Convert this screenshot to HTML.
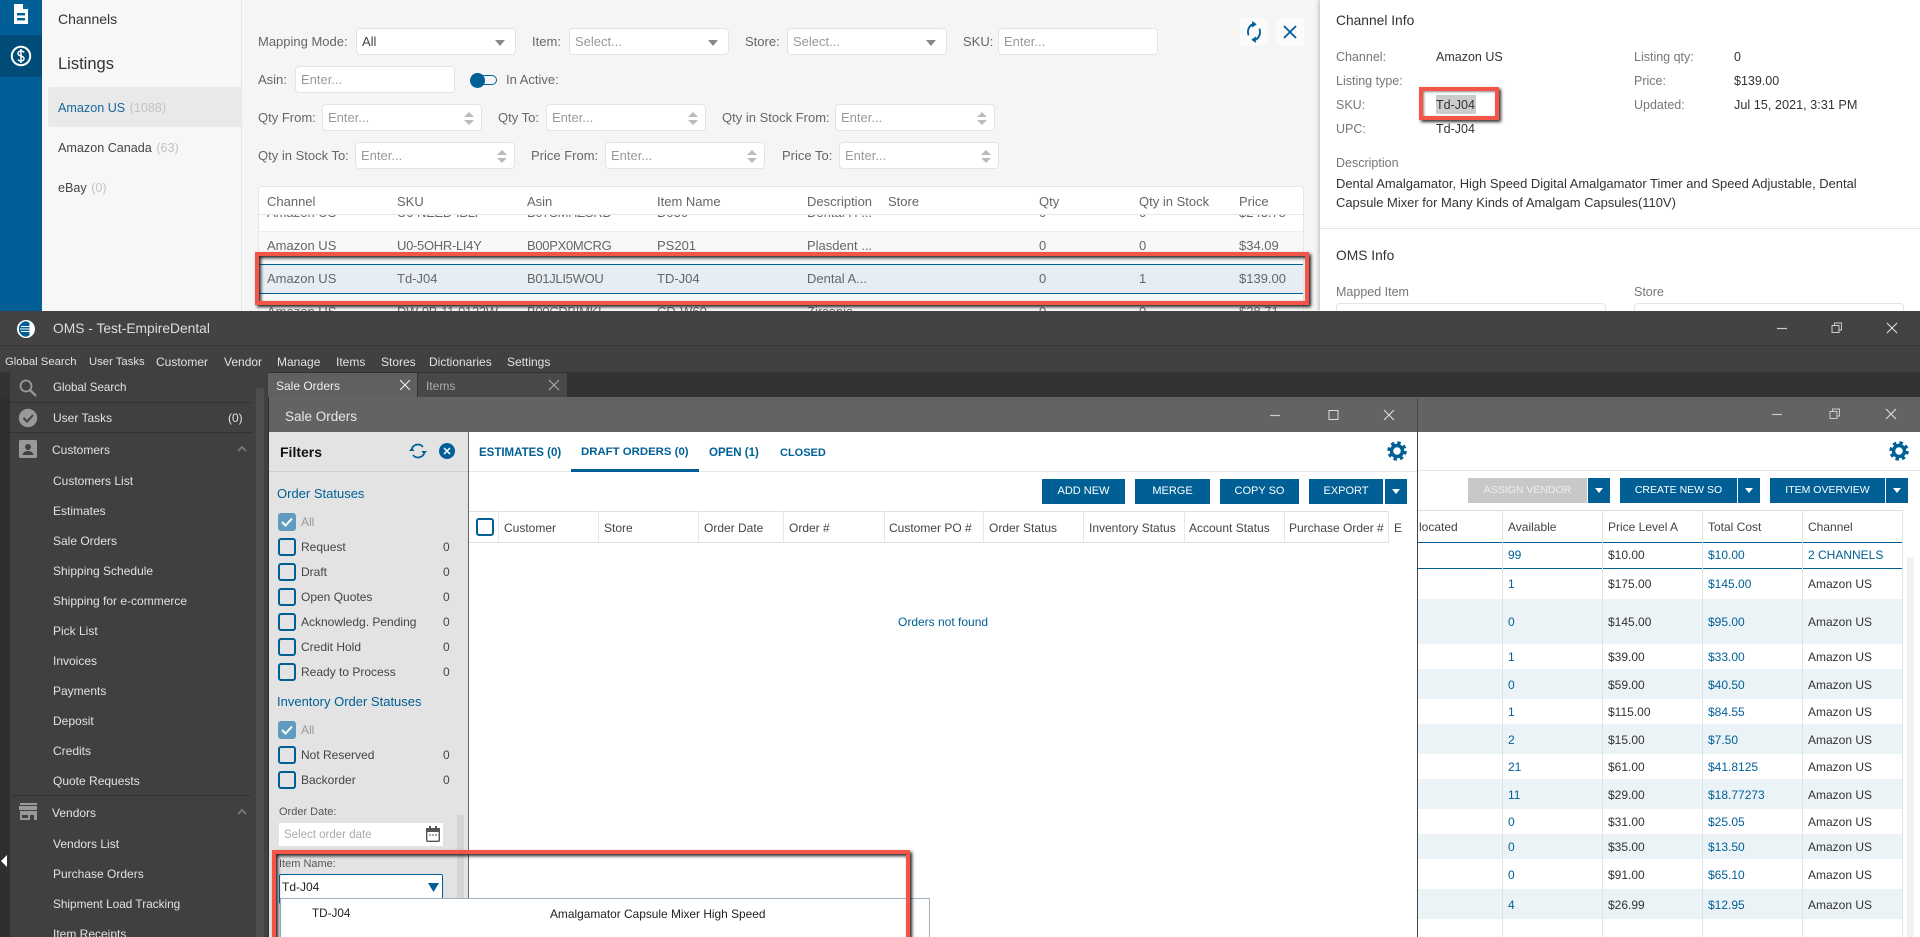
<!DOCTYPE html>
<html><head><meta charset="utf-8"><title>OMS</title>
<style>
html,body{margin:0;padding:0;width:1920px;height:937px;overflow:hidden;background:#fff}
body{position:relative;font-family:"Liberation Sans",sans-serif;font-size:13px;color:#555}
.t{position:absolute;white-space:nowrap;line-height:16px}
.b{position:absolute;box-sizing:border-box}
.i{position:absolute;box-sizing:border-box;background:#fff;border:1px solid #e4e4e4;border-radius:4px;height:27px;width:160px;color:#999;line-height:26px;padding-left:5px;font-size:13px}
.i.s:after{content:"";position:absolute;right:10px;top:11px;border:5px solid transparent;border-top:6px solid #888;border-bottom:0}
.i.n:before{content:"";position:absolute;right:7px;top:7px;border:5px solid transparent;border-bottom:5px solid #bbb;border-top:0}
.i.n:after{content:"";position:absolute;right:7px;top:15px;border:5px solid transparent;border-top:5px solid #bbb;border-bottom:0}
.l{color:#666}
.q{letter-spacing:-.3px}
.r{box-shadow:2px 2px 3px #222,inset 2px 2px 3px #222;border:4px solid #f55549}
.d{color:#e2e2e2;font-size:12px;left:53px}
.m{color:#e2e2e2;font-size:12px;top:354px}
.c{position:absolute;box-sizing:border-box;left:278px;width:18px;height:18px;border:2px solid #006096;border-radius:3px}
.c.k{background:#5f9cc0;border-color:#5f9cc0}
.f{font-size:12px;color:#444;left:301px}
.n0{font-size:12px;color:#444;left:443px}
.bt{position:absolute;box-sizing:border-box;background:#006096;color:#fff;text-align:center;font-size:11px;height:25px;line-height:25px;white-space:nowrap}
.ar:after{content:"";position:absolute;left:50%;margin-left:-4px;top:10px;border:4px solid transparent;border-top:5px solid #fff;border-bottom:0}
.h{font-size:12px;color:#444;top:520px}
.bl{color:#006096}
.v{font-size:12px}
.ink{color:#333}
.w{font-size:12.500px}
.y{color:#777;font-size:12.500px}
</style></head><body>

<!-- TOP: web app -->
<div class="b" style="left:0;top:0;width:42px;height:311px;background:#005f96"></div>
<div class="b" style="left:0;top:35px;width:42px;height:42px;background:#004b77"></div>
<svg class="b" style="left:12px;top:3px" width="18" height="22" viewBox="0 0 18 22"><path d="M2 1h9l5 5v15H2z" fill="#fff"/><path d="M11 1v5h5" fill="#005f96"/><rect x="5" y="10" width="8" height="2.400" fill="#005f96"/><rect x="5" y="15" width="8" height="2.400" fill="#005f96"/></svg>
<svg class="b" style="left:10px;top:45px" width="22" height="22" viewBox="0 0 22 22"><circle cx="11" cy="11" r="9.200" fill="none" stroke="#fff" stroke-width="2"/><path d="M14 7.500c-.6-1-1.700-1.500-3-1.500-1.800 0-3 1-3 2.500s1.300 2 3 2.500 3 1 3 2.500-1.200 2.500-3 2.500c-1.300 0-2.400-.5-3-1.500M11 4v14" fill="none" stroke="#fff" stroke-width="1.500"/></svg>

<div class="b" style="left:42px;top:0;width:200px;height:311px;background:#f7f7f7;border-right:1px solid #e5e5e5"></div>
<span class="t ink" style="left:58px;top:11px;font-size:14px">Channels</span>
<span class="t ink" style="left:58px;top:56px;font-size:16.500px">Listings</span>
<div class="b" style="left:48px;top:87px;width:193px;height:40px;background:#e9e9e9;border-radius:3px 0 0 3px"></div>
<span class="t" style="left:58px;top:100px;color:#15689c;font-size:12.600px">Amazon US <span style="color:#c4c4c4;margin-left:1px">(1088)</span></span>
<span class="t" style="left:58px;top:140px;color:#444;font-size:12.600px">Amazon Canada <span style="color:#c4c4c4;margin-left:1px">(63)</span></span>
<span class="t" style="left:58px;top:180px;color:#444;font-size:12.600px">eBay <span style="color:#c4c4c4;margin-left:1px">(0)</span></span>

<div class="b" style="left:242px;top:0;width:1078px;height:311px;background:#f5f5f5"></div>
<span class="t l" style="left:258px;top:34px">Mapping Mode:</span>
<div class="i s" style="left:356px;top:28px;color:#444">All</div>
<span class="t l" style="left:532px;top:34px">Item:</span>
<div class="i s" style="left:569px;top:28px">Select...</div>
<span class="t l" style="left:745px;top:34px">Store:</span>
<div class="i s" style="left:787px;top:28px">Select...</div>
<span class="t l" style="left:963px;top:34px">SKU:</span>
<div class="i" style="left:998px;top:28px">Enter...</div>
<div class="b" style="left:1240px;top:18px;width:28px;height:28px;background:#fbfbfb;border-radius:4px"></div>
<svg class="b" style="left:1245px;top:21px" width="18" height="22" viewBox="0 0 20 20" preserveAspectRatio="none"><path d="M4 13a7 7 0 0 1 7-10M16 7a7 7 0 0 1-7 10" fill="none" stroke="#005f96" stroke-width="2"/><path d="M8 0l5 3-5 3zM12 14l-5 3 5 3z" fill="#005f96"/></svg>
<div class="b" style="left:1276px;top:18px;width:28px;height:28px;background:#fbfbfb;border-radius:4px"></div>
<svg class="b" style="left:1282px;top:24px" width="16" height="16" viewBox="0 0 16 16"><path d="M2 2l12 12M14 2L2 14" stroke="#005f96" stroke-width="1.800" fill="none"/></svg>

<span class="t l" style="left:258px;top:72px">Asin:</span>
<div class="i" style="left:295px;top:66px">Enter...</div>
<div class="b" style="left:472px;top:75px;width:25px;height:10px;border:1.500px solid #005f96;border-radius:5px"></div>
<div class="b" style="left:470px;top:73px;width:15px;height:15px;border-radius:50%;background:#005f96"></div>
<span class="t l" style="left:506px;top:72px">In Active:</span>

<span class="t l" style="left:258px;top:110px">Qty From:</span>
<div class="i n" style="left:322px;top:104px">Enter...</div>
<span class="t l" style="left:498px;top:110px">Qty To:</span>
<div class="i n" style="left:546px;top:104px">Enter...</div>
<span class="t l" style="left:722px;top:110px">Qty in Stock From:</span>
<div class="i n" style="left:835px;top:104px">Enter...</div>

<span class="t l" style="left:258px;top:148px">Qty in Stock To:</span>
<div class="i n" style="left:355px;top:142px">Enter...</div>
<span class="t l" style="left:531px;top:148px">Price From:</span>
<div class="i n" style="left:605px;top:142px">Enter...</div>
<span class="t l" style="left:782px;top:148px">Price To:</span>
<div class="i n" style="left:839px;top:142px">Enter...</div>

<!-- listing table -->
<div class="b" style="left:258px;top:186px;width:1046px;height:125px;background:#fff;border:1px solid #e6e6e6;border-bottom:0;border-radius:4px 4px 0 0;overflow:hidden">
 <div class="b" style="left:0;top:44px;width:1046px;height:33px;background:#f8f8f8;border-top:1px solid #eee"></div>
 <div class="b" style="left:0;top:77px;width:1046px;height:30px;background:#e6eef4;border-top:1px solid #005f96;border-bottom:1px solid #005f96"></div>
 <div class="b" style="left:0;top:107px;width:1046px;height:20px;background:#f8f8f8"></div>
 <span class="t l" style="left:8px;top:18px">Amazon US</span><span class="t l q" style="left:138px;top:18px">U6-NEED-IBLI</span><span class="t l q" style="left:268px;top:18px">B07SMHZSRD</span><span class="t l" style="left:398px;top:18px">D030</span><span class="t l" style="left:548px;top:18px">Dental H ...</span><span class="t l" style="left:780px;top:18px">0</span><span class="t l" style="left:880px;top:18px">0</span><span class="t l" style="left:980px;top:18px">$243.75</span>
 <div class="b" style="left:0;top:0;width:1046px;height:28px;background:#fff;border-bottom:1px solid #e6e6e6"></div>
 <span class="t l" style="left:8px;top:7px">Channel</span><span class="t l" style="left:138px;top:7px">SKU</span><span class="t l" style="left:268px;top:7px">Asin</span><span class="t l" style="left:398px;top:7px">Item Name</span><span class="t l" style="left:548px;top:7px">Description</span><span class="t l" style="left:629px;top:7px">Store</span><span class="t l" style="left:780px;top:7px">Qty</span><span class="t l" style="left:880px;top:7px">Qty in Stock</span><span class="t l" style="left:980px;top:7px">Price</span>
 <span class="t l" style="left:8px;top:51px">Amazon US</span><span class="t l q" style="left:138px;top:51px">U0-5OHR-LI4Y</span><span class="t l q" style="left:268px;top:51px">B00PX0MCRG</span><span class="t l" style="left:398px;top:51px">PS201</span><span class="t l" style="left:548px;top:51px">Plasdent ...</span><span class="t l" style="left:780px;top:51px">0</span><span class="t l" style="left:880px;top:51px">0</span><span class="t l" style="left:980px;top:51px">$34.09</span>
 <span class="t l" style="left:8px;top:84px">Amazon US</span><span class="t l" style="left:138px;top:84px">Td-J04</span><span class="t l q" style="left:268px;top:84px">B01JLI5WOU</span><span class="t l" style="left:398px;top:84px">TD-J04</span><span class="t l" style="left:548px;top:84px">Dental A...</span><span class="t l" style="left:780px;top:84px">0</span><span class="t l" style="left:880px;top:84px">1</span><span class="t l" style="left:980px;top:84px">$139.00</span>
 <span class="t l" style="left:8px;top:117px">Amazon US</span><span class="t l q" style="left:138px;top:117px">DW-9B-11-0123W</span><span class="t l q" style="left:268px;top:117px">B00CDBIMKI</span><span class="t l" style="left:398px;top:117px">CD-W60</span><span class="t l" style="left:548px;top:117px">Zirconia</span><span class="t l" style="left:780px;top:117px">0</span><span class="t l" style="left:880px;top:117px">0</span><span class="t l" style="left:980px;top:117px">$28.71</span>
</div>
<div class="b r" style="left:255px;top:252px;width:1054px;height:53px"></div>

<!-- right info panel -->
<div class="b" style="left:1320px;top:0;width:600px;height:311px;background:#fff;box-shadow:-2px 0 3px #ccc"></div>
<span class="t ink" style="left:1336px;top:13px;font-size:13.800px">Channel Info</span>
<span class="t y" style="left:1336px;top:49px">Channel:</span><span class="t ink w" style="left:1436px;top:49px">Amazon US</span>
<span class="t y" style="left:1336px;top:73px">Listing type:</span>
<span class="t y" style="left:1336px;top:97px">SKU:</span>
<div class="b" style="left:1436px;top:95px;width:40px;height:19px;background:#ccc"></div>
<span class="t ink w" style="left:1436px;top:97px">Td-J04</span>
<span class="t y" style="left:1336px;top:121px">UPC:</span><span class="t ink w" style="left:1436px;top:121px">Td-J04</span>
<span class="t y" style="left:1634px;top:49px">Listing qty:</span><span class="t ink w" style="left:1734px;top:49px">0</span>
<span class="t y" style="left:1634px;top:73px">Price:</span><span class="t ink w" style="left:1734px;top:73px">$139.00</span>
<span class="t y" style="left:1634px;top:97px">Updated:</span><span class="t ink" style="left:1734px;top:97px;font-size:12.700px">Jul 15, 2021, 3:31 PM</span>
<span class="t y" style="left:1336px;top:155px">Description</span>
<span class="t ink" style="left:1336px;top:176px;font-size:12.950px">Dental Amalgamator, High Speed Digital Amalgamator Timer and Speed Adjustable, Dental</span>
<span class="t ink" style="left:1336px;top:195px;font-size:12.950px">Capsule Mixer for Many Kinds of Amalgam Capsules(110V)</span>
<div class="b" style="left:1320px;top:228px;width:600px;height:1px;background:#e5e5e5"></div>
<span class="t ink" style="left:1336px;top:248px;font-size:13.800px">OMS Info</span>
<span class="t y" style="left:1336px;top:284px">Mapped Item</span>
<span class="t y" style="left:1634px;top:284px">Store</span>
<div class="b" style="left:1336px;top:303px;width:270px;height:20px;border:1px solid #e4e4e4;border-radius:4px"></div>
<div class="b" style="left:1634px;top:303px;width:270px;height:20px;border:1px solid #e4e4e4;border-radius:4px"></div>
<div class="b r" style="left:1419px;top:87px;width:80px;height:33px;box-shadow:2px 2px 3px #333,inset 1px 1px 2px #888"></div>

<!-- BOTTOM: desktop window -->
<div class="b" style="left:0;top:311px;width:1920px;height:626px;background:#2f2f2f"></div>
<div class="b" style="left:0;top:311px;width:1920px;height:35px;background:#434343;border-bottom:1px solid #333"></div>
<div class="b" style="left:0;top:346px;width:1920px;height:26px;background:#414141"></div>
<div class="b" style="left:0;top:372px;width:1920px;height:25px;background:#333"></div>
<svg class="b" style="left:16px;top:319px" width="20" height="20" viewBox="0 0 20 20"><circle cx="10" cy="10" r="9" fill="#fff"/><path d="M9.500 2.200a7.900 7.900 0 0 0 0 15.600 9 9 0 0 0 4-1.500V3.700a9 9 0 0 0-4-1.500z" fill="#005f96"/><path d="M5 7.500h10M4 10h13M5 12.500h10" stroke="#fff" stroke-width="1"/></svg>
<span class="t" style="left:53px;top:321px;font-size:13.800px;color:#ddd">OMS - Test-EmpireDental</span>
<svg class="b" style="left:1771px;top:320px" width="130" height="16" viewBox="0 0 130 16"><path d="M6 8.500h10" stroke="#ccc" stroke-width="1.200"/><path d="M61 5.500h7v7h-7zM63.500 5.500v-2.500h7v7h-2.500" fill="none" stroke="#ccc"/><path d="M116 3l10 10M126 3l-10 10" stroke="#ddd" stroke-width="1.100"/></svg>

<span class="t m" style="left:5px;font-size:11.300px">Global Search</span><span class="t m" style="left:89px;font-size:11.300px">User Tasks</span><span class="t m" style="left:156px">Customer</span><span class="t m" style="left:224px">Vendor</span><span class="t m" style="left:277px">Manage</span><span class="t m" style="left:336px">Items</span><span class="t m" style="left:381px">Stores</span><span class="t m" style="left:429px">Dictionaries</span><span class="t m" style="left:507px">Settings</span>

<!-- sidebar -->
<div class="b" style="left:10px;top:372px;width:258px;height:565px;background:#404040"></div>
<div class="b" style="left:256px;top:388px;width:8px;height:549px;background:#4e4e4e"></div>
<div class="b" style="left:10px;top:402px;width:242px;height:1px;background:#333"></div>
<div class="b" style="left:10px;top:432px;width:242px;height:1px;background:#333"></div>
<div class="b" style="left:12px;top:795px;width:239px;height:1px;background:#333"></div>
<svg class="b" style="left:18px;top:378px" width="20" height="20" viewBox="0 0 20 20"><circle cx="8" cy="8" r="5.500" fill="none" stroke="#999" stroke-width="1.800"/><path d="M12 12l6 6" stroke="#999" stroke-width="2.200"/></svg>
<svg class="b" style="left:18px;top:408px" width="20" height="20" viewBox="0 0 20 20"><circle cx="10" cy="10" r="9.200" fill="#999"/><path d="M5.500 10l3.500 3.500 6-6.500" fill="none" stroke="#404040" stroke-width="2"/></svg>
<svg class="b" style="left:19px;top:440px" width="19" height="19" viewBox="0 0 19 19"><rect width="18" height="18" rx="1.500" fill="#999"/><circle cx="9" cy="7" r="3" fill="#404040"/><path d="M3.500 15c.5-3 3-4 5.500-4s5 1 5.500 4z" fill="#404040"/></svg>
<svg class="b" style="left:19px;top:803px" width="19" height="18" viewBox="0 0 19 18"><path d="M1 0h17v2H1zM0 3h18v4H0zM1 8h17v9h-3v-5h-4v5H1zM3 12v3h6v-3z" fill="#999"/></svg>
<svg class="b" style="left:237px;top:445px" width="10" height="7"><path d="M1 6l4-4 4 4" fill="none" stroke="#777" stroke-width="1.800"/></svg>
<svg class="b" style="left:237px;top:808px" width="10" height="7"><path d="M1 6l4-4 4 4" fill="none" stroke="#777" stroke-width="1.800"/></svg>
<svg class="b" style="left:1px;top:855px" width="7" height="12"><path d="M6 0v12L0 6z" fill="#fff"/></svg>
<span class="t d" style="top:380px;font-size:11.600px">Global Search</span>
<span class="t d" style="top:410px">User Tasks</span><span class="t d" style="left:228px;top:410px">(0)</span>
<span class="t d" style="left:52px;top:442px">Customers</span>
<span class="t d" style="top:473px">Customers List</span>
<span class="t d" style="top:503px">Estimates</span>
<span class="t d" style="top:533px">Sale Orders</span>
<span class="t d" style="top:563px">Shipping Schedule</span>
<span class="t d" style="top:593px">Shipping for e-commerce</span>
<span class="t d" style="top:623px">Pick List</span>
<span class="t d" style="top:653px">Invoices</span>
<span class="t d" style="top:683px">Payments</span>
<span class="t d" style="top:713px">Deposit</span>
<span class="t d" style="top:743px">Credits</span>
<span class="t d" style="top:773px">Quote Requests</span>
<span class="t d" style="left:52px;top:805px">Vendors</span>
<span class="t d" style="top:836px">Vendors List</span>
<span class="t d" style="top:866px">Purchase Orders</span>
<span class="t d" style="top:896px;font-size:11.800px">Shipment Load Tracking</span>
<span class="t d" style="top:926px">Item Receipts</span>

<!-- tabs -->
<div class="b" style="left:268px;top:373px;width:149px;height:24px;background:#606060"></div>
<span class="t" style="left:276px;top:378px;font-size:12px;color:#eee">Sale Orders</span>
<svg class="b" style="left:399px;top:379px" width="12" height="12"><path d="M1 1l10 10M11 1L1 11" stroke="#eee" stroke-width="1.100"/></svg>
<div class="b" style="left:418px;top:373px;width:149px;height:24px;background:#484848"></div>
<span class="t" style="left:426px;top:378px;font-size:12px;color:#aaa">Items</span>
<svg class="b" style="left:548px;top:379px" width="12" height="12"><path d="M1 1l10 10M11 1L1 11" stroke="#aaa" stroke-width="1.100"/></svg>

<!-- behind window: Items -->
<div class="b" style="left:269px;top:397px;width:1651px;height:540px;background:#fff"></div>
<div class="b" style="left:269px;top:397px;width:1651px;height:35px;background:#636363"></div>
<svg class="b" style="left:1770px;top:406px" width="130" height="16" viewBox="0 0 130 16"><path d="M2 8.500h10" stroke="#ccc" stroke-width="1.200"/><path d="M60 5.500h7v7h-7zM62.500 5.500v-2.500h7v7h-2.500" fill="none" stroke="#ccc"/><path d="M116 3l10 10M126 3l-10 10" stroke="#ddd" stroke-width="1.100"/></svg>
<svg class="b" style="left:1889px;top:441px" width="20" height="20" viewBox="0 0 20 20"><circle cx="10" cy="10" r="5.500" fill="none" stroke="#006096" stroke-width="3.500"/><circle cx="10" cy="10" r="8" fill="none" stroke="#006096" stroke-width="3.500" stroke-dasharray="3.300 3"/></svg>
<div class="b" style="left:1418px;top:470px;width:502px;height:1px;background:#e5e5e5"></div>
<div class="bt" style="left:1468px;top:478px;width:119px;background:#c8c8c8;color:#eee;font-size:10.500px">ASSIGN VENDOR</div>
<div class="bt ar" style="left:1588px;top:478px;width:22px"></div>
<div class="bt" style="left:1620px;top:478px;width:117px;font-size:10.500px">CREATE NEW SO</div>
<div class="bt ar" style="left:1738px;top:478px;width:22px"></div>
<div class="bt" style="left:1770px;top:478px;width:115px;font-size:10.500px">ITEM OVERVIEW</div>
<div class="bt ar" style="left:1886px;top:478px;width:22px"></div>
<!-- items table -->
<div class="b" style="left:1418px;top:510px;width:484px;height:1px;background:#ddd"></div>
<div class="b" style="left:1418px;top:542px;width:484px;height:1px;background:#006096"></div>
<div class="b" style="left:1418px;top:568px;width:484px;height:1px;background:#006096"></div>
<div class="b" style="left:1418px;top:599px;width:484px;height:45px;background:#ecf3f6"></div>
<div class="b" style="left:1418px;top:669px;width:484px;height:30px;background:#ecf3f6"></div>
<div class="b" style="left:1418px;top:724px;width:484px;height:30px;background:#ecf3f6"></div>
<div class="b" style="left:1418px;top:779px;width:484px;height:30px;background:#ecf3f6"></div>
<div class="b" style="left:1418px;top:834px;width:484px;height:25px;background:#ecf3f6"></div>
<div class="b" style="left:1418px;top:889px;width:484px;height:30px;background:#ecf3f6"></div>
<div class="b" style="left:1502px;top:510px;width:1px;height:427px;background:#dde5e9"></div>
<div class="b" style="left:1602px;top:510px;width:1px;height:427px;background:#dde5e9"></div>
<div class="b" style="left:1702px;top:510px;width:1px;height:427px;background:#dde5e9"></div>
<div class="b" style="left:1802px;top:510px;width:1px;height:427px;background:#dde5e9"></div>
<div class="b" style="left:1902px;top:510px;width:1px;height:427px;background:#dde5e9"></div>
<div class="b" style="left:1907px;top:557px;width:7px;height:380px;background:#f2f2f2"></div>
<span class="t v" style="left:1419px;top:519px;color:#444">located</span><span class="t v" style="left:1508px;top:519px;color:#444">Available</span><span class="t v" style="left:1608px;top:519px;color:#444">Price Level A</span><span class="t v" style="left:1708px;top:519px;color:#444">Total Cost</span><span class="t v" style="left:1808px;top:519px;color:#444">Channel</span>
<span class="t v bl" style="left:1508px;top:547px">99</span><span class="t v ink" style="left:1608px;top:547px">$10.00</span><span class="t v bl" style="left:1708px;top:547px">$10.00</span><span class="t v bl" style="left:1808px;top:547px">2 CHANNELS</span>
<span class="t v bl" style="left:1508px;top:576px">1</span><span class="t v ink" style="left:1608px;top:576px">$175.00</span><span class="t v bl" style="left:1708px;top:576px">$145.00</span><span class="t v ink" style="left:1808px;top:576px">Amazon US</span>
<span class="t v bl" style="left:1508px;top:614px">0</span><span class="t v ink" style="left:1608px;top:614px">$145.00</span><span class="t v bl" style="left:1708px;top:614px">$95.00</span><span class="t v ink" style="left:1808px;top:614px">Amazon US</span>
<span class="t v bl" style="left:1508px;top:649px">1</span><span class="t v ink" style="left:1608px;top:649px">$39.00</span><span class="t v bl" style="left:1708px;top:649px">$33.00</span><span class="t v ink" style="left:1808px;top:649px">Amazon US</span>
<span class="t v bl" style="left:1508px;top:677px">0</span><span class="t v ink" style="left:1608px;top:677px">$59.00</span><span class="t v bl" style="left:1708px;top:677px">$40.50</span><span class="t v ink" style="left:1808px;top:677px">Amazon US</span>
<span class="t v bl" style="left:1508px;top:704px">1</span><span class="t v ink" style="left:1608px;top:704px">$115.00</span><span class="t v bl" style="left:1708px;top:704px">$84.55</span><span class="t v ink" style="left:1808px;top:704px">Amazon US</span>
<span class="t v bl" style="left:1508px;top:732px">2</span><span class="t v ink" style="left:1608px;top:732px">$15.00</span><span class="t v bl" style="left:1708px;top:732px">$7.50</span><span class="t v ink" style="left:1808px;top:732px">Amazon US</span>
<span class="t v bl" style="left:1508px;top:759px">21</span><span class="t v ink" style="left:1608px;top:759px">$61.00</span><span class="t v bl" style="left:1708px;top:759px">$41.8125</span><span class="t v ink" style="left:1808px;top:759px">Amazon US</span>
<span class="t v bl" style="left:1508px;top:787px">11</span><span class="t v ink" style="left:1608px;top:787px">$29.00</span><span class="t v bl" style="left:1708px;top:787px">$18.77273</span><span class="t v ink" style="left:1808px;top:787px">Amazon US</span>
<span class="t v bl" style="left:1508px;top:814px">0</span><span class="t v ink" style="left:1608px;top:814px">$31.00</span><span class="t v bl" style="left:1708px;top:814px">$25.05</span><span class="t v ink" style="left:1808px;top:814px">Amazon US</span>
<span class="t v bl" style="left:1508px;top:839px">0</span><span class="t v ink" style="left:1608px;top:839px">$35.00</span><span class="t v bl" style="left:1708px;top:839px">$13.50</span><span class="t v ink" style="left:1808px;top:839px">Amazon US</span>
<span class="t v bl" style="left:1508px;top:867px">0</span><span class="t v ink" style="left:1608px;top:867px">$91.00</span><span class="t v bl" style="left:1708px;top:867px">$65.10</span><span class="t v ink" style="left:1808px;top:867px">Amazon US</span>
<span class="t v bl" style="left:1508px;top:897px">4</span><span class="t v ink" style="left:1608px;top:897px">$26.99</span><span class="t v bl" style="left:1708px;top:897px">$12.95</span><span class="t v ink" style="left:1808px;top:897px">Amazon US</span>

<!-- Sale Orders window -->
<div class="b" style="left:269px;top:398px;width:1149px;height:539px;background:#fff;border-right:1px solid #444"></div>
<div class="b" style="left:269px;top:398px;width:1149px;height:34px;background:#636363;border-right:1px solid #444"></div>
<span class="t" style="left:285px;top:409px;font-size:13.500px;color:#e8e8e8">Sale Orders</span>
<svg class="b" style="left:1265px;top:407px" width="135" height="16" viewBox="0 0 135 16"><path d="M5 8.500h10" stroke="#ccc" stroke-width="1.200"/><rect x="64" y="3.500" width="9" height="9" fill="none" stroke="#ddd"/><path d="M119 3l10 10M129 3l-10 10" stroke="#ddd" stroke-width="1.100"/></svg>

<!-- filters -->
<div class="b" style="left:269px;top:432px;width:200px;height:505px;background:#e3e3e3;border-right:1px solid #666"></div>
<span class="t" style="left:280px;top:444px;font-size:14px;font-weight:bold;color:#111">Filters</span>
<svg class="b" style="left:409px;top:442px" width="18" height="18" viewBox="0 0 18 18"><path d="M2.500 8a6.500 6.500 0 0 1 11.500-3M15.500 10a6.500 6.500 0 0 1-11.500 3" fill="none" stroke="#006096" stroke-width="1.700"/><path d="M0 9h5.500L3 5.500zM18 9h-5.500l2.500 3.500z" fill="#006096"/></svg>
<svg class="b" style="left:439px;top:443px" width="16" height="16" viewBox="0 0 16 16"><circle cx="8" cy="8" r="8" fill="#006096"/><path d="M5 5l6 6M11 5l-6 6" stroke="#fff" stroke-width="1.500"/></svg>
<div class="b" style="left:269px;top:471px;width:199px;height:1px;background:#d0d0d0"></div>
<span class="t bl" style="left:277px;top:486px;font-size:13px">Order Statuses</span>
<div class="c k" style="top:513px"><svg width="14" height="14" style="position:absolute;left:0;top:0"><path d="M2 7l3.500 3.500L12 3.500" fill="none" stroke="#fff" stroke-width="2"/></svg></div><span class="t f" style="top:514px;color:#999">All</span>
<div class="c" style="top:538px"></div><span class="t f" style="top:539px">Request</span><span class="t n0" style="top:539px">0</span>
<div class="c" style="top:563px"></div><span class="t f" style="top:564px">Draft</span><span class="t n0" style="top:564px">0</span>
<div class="c" style="top:588px"></div><span class="t f" style="top:589px">Open Quotes</span><span class="t n0" style="top:589px">0</span>
<div class="c" style="top:613px"></div><span class="t f" style="top:614px">Acknowledg. Pending</span><span class="t n0" style="top:614px">0</span>
<div class="c" style="top:638px"></div><span class="t f" style="top:639px">Credit Hold</span><span class="t n0" style="top:639px">0</span>
<div class="c" style="top:663px"></div><span class="t f" style="top:664px">Ready to Process</span><span class="t n0" style="top:664px">0</span>
<span class="t bl" style="left:277px;top:694px;font-size:13px">Inventory Order Statuses</span>
<div class="c k" style="top:721px"><svg width="14" height="14" style="position:absolute;left:0;top:0"><path d="M2 7l3.500 3.500L12 3.500" fill="none" stroke="#fff" stroke-width="2"/></svg></div><span class="t f" style="top:722px;color:#999">All</span>
<div class="c" style="top:746px"></div><span class="t f" style="top:747px">Not Reserved</span><span class="t n0" style="top:747px">0</span>
<div class="c" style="top:771px"></div><span class="t f" style="top:772px">Backorder</span><span class="t n0" style="top:772px">0</span>
<div class="b" style="left:457px;top:815px;width:7px;height:122px;background:#d4d4d4"></div>
<span class="t" style="left:279px;top:804px;font-size:11px;color:#555">Order Date:</span>
<div class="b" style="left:279px;top:823px;width:164px;height:23px;background:#fff"></div>
<span class="t" style="left:284px;top:827px;font-size:11.500px;color:#aaa">Select order date</span>
<svg class="b" style="left:426px;top:826px" width="14" height="16" viewBox="0 0 14 16"><rect x=".7" y="2.700" width="12.600" height="12.600" rx="1" fill="none" stroke="#555" stroke-width="1.400"/><path d="M0 2h14v4H0zM3 0h2v3H3zM9 0h2v3H9z" fill="#555"/><path d="M3 9h2M6 9h2M9 9h2" stroke="#555"/></svg>
<span class="t" style="left:279px;top:856px;font-size:11px;color:#555">Item Name:</span>
<div class="b" style="left:279px;top:874px;width:164px;height:30px;background:#fff;border:1px solid #006096;border-radius:2px"></div>
<span class="t" style="left:282px;top:879px;font-size:12px;color:#222">Td-J04</span>
<svg class="b" style="left:428px;top:883px" width="11" height="9"><path d="M0 0h11L5.500 9z" fill="#006096"/></svg>
<div class="b" style="left:280px;top:898px;width:650px;height:39px;background:#fff;border:1px solid #9fb2c0;border-bottom:0"></div>
<span class="t" style="left:312px;top:906px;font-size:11.700px;color:#222">TD-J04</span>
<span class="t" style="left:550px;top:906px;font-size:11.900px;color:#222">Amalgamator Capsule Mixer High Speed</span>

<!-- main sale orders -->
<span class="t bl" style="left:479px;top:445px;font-size:11.500px;font-weight:bold">ESTIMATES (0)</span>
<span class="t bl" style="left:581px;top:444px;font-size:11.400px;font-weight:bold">DRAFT ORDERS (0)</span>
<span class="t bl" style="left:709px;top:445px;font-size:11.500px;font-weight:bold">OPEN (1)</span>
<span class="t bl" style="left:780px;top:445px;font-size:11px;font-weight:bold">CLOSED</span>
<div class="b" style="left:469px;top:471px;width:948px;height:1px;background:#e5e5e5"></div>
<div class="b" style="left:571px;top:469px;width:128px;height:3px;background:#006096"></div>
<svg class="b" style="left:1387px;top:441px" width="20" height="20" viewBox="0 0 20 20"><circle cx="10" cy="10" r="5.500" fill="none" stroke="#006096" stroke-width="3.500"/><circle cx="10" cy="10" r="8" fill="none" stroke="#006096" stroke-width="3.500" stroke-dasharray="3.300 3"/></svg>
<div class="bt" style="left:1042px;top:479px;width:83px">ADD NEW</div>
<div class="bt" style="left:1135px;top:479px;width:75px">MERGE</div>
<div class="bt" style="left:1220px;top:479px;width:79px">COPY SO</div>
<div class="bt" style="left:1309px;top:479px;width:74px">EXPORT</div>
<div class="bt ar" style="left:1385px;top:479px;width:22px"></div>
<div class="b" style="left:469px;top:511px;width:920px;height:32px;border-top:1px solid #e0e0e0;border-bottom:1px solid #e0e0e0"></div>
<div class="c" style="left:476px;top:518px"></div>
<div class="b" style="left:498px;top:511px;width:1px;height:31px;background:#e8e8e8"></div><div class="b" style="left:598px;top:511px;width:1px;height:31px;background:#e8e8e8"></div><div class="b" style="left:698px;top:511px;width:1px;height:31px;background:#e8e8e8"></div><div class="b" style="left:783px;top:511px;width:1px;height:31px;background:#e8e8e8"></div><div class="b" style="left:884px;top:511px;width:1px;height:31px;background:#e8e8e8"></div><div class="b" style="left:983px;top:511px;width:1px;height:31px;background:#e8e8e8"></div><div class="b" style="left:1083px;top:511px;width:1px;height:31px;background:#e8e8e8"></div><div class="b" style="left:1184px;top:511px;width:1px;height:31px;background:#e8e8e8"></div><div class="b" style="left:1284px;top:511px;width:1px;height:31px;background:#e8e8e8"></div><div class="b" style="left:1388px;top:511px;width:1px;height:31px;background:#e8e8e8"></div>
<span class="t h" style="left:504px">Customer</span><span class="t h" style="left:604px">Store</span><span class="t h" style="left:704px">Order Date</span><span class="t h" style="left:789px">Order #</span><span class="t h" style="left:889px">Customer PO #</span><span class="t h" style="left:989px">Order Status</span><span class="t h" style="left:1089px">Inventory Status</span><span class="t h" style="left:1189px">Account Status</span><span class="t h" style="left:1289px">Purchase Order #</span><span class="t h" style="left:1394px">E</span>
<span class="t bl" style="left:898px;top:614px;font-size:12px">Orders not found</span>

<div class="b r" style="left:272px;top:850px;width:638px;height:100px"></div>
</body></html>
